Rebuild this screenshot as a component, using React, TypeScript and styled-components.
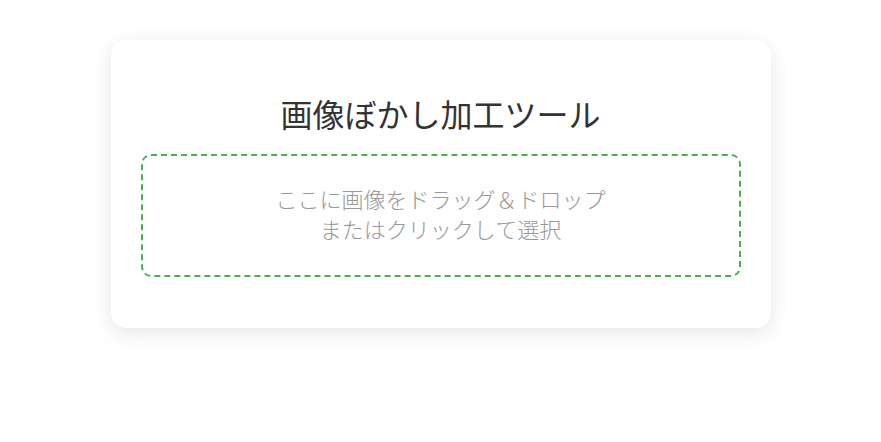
import styled, { createGlobalStyle } from "styled-components"

const Global = createGlobalStyle`
    body {
        margin: 0;
        background: #ffffff;
        font-family: "Liberation Sans", "Noto Sans CJK JP", sans-serif;
    }
`

const Card = styled.div`
    max-width: 600px;
    margin: 40px auto;
    padding: 30px;
    background: #ffffff;
    border-radius: 15px;
    box-shadow: 0 5px 20px rgba(0, 0, 0, 0.1);
    text-align: center;
`

const Titulo = styled.h1`
    font-size: 32px;
    font-weight: normal;
    color: #333;
    margin: 20px 0 18px;
`

const DropZone = styled.div`
    border: 2px dashed #4caf50;
    border-radius: 10px;
    padding: 30px;
    margin-bottom: 21px;
    color: #999;
    font-size: 22px;
    font-weight: 300;
    line-height: 29.5px;
    cursor: pointer;
`

export default function App() {
    return <>
        <Global />
        <Card>
            <Titulo>画像ぼかし加工ツール</Titulo>
            <DropZone>
                ここに画像をドラッグ＆ドロップ<br />
                またはクリックして選択
            </DropZone>
        </Card>
    </>
}
